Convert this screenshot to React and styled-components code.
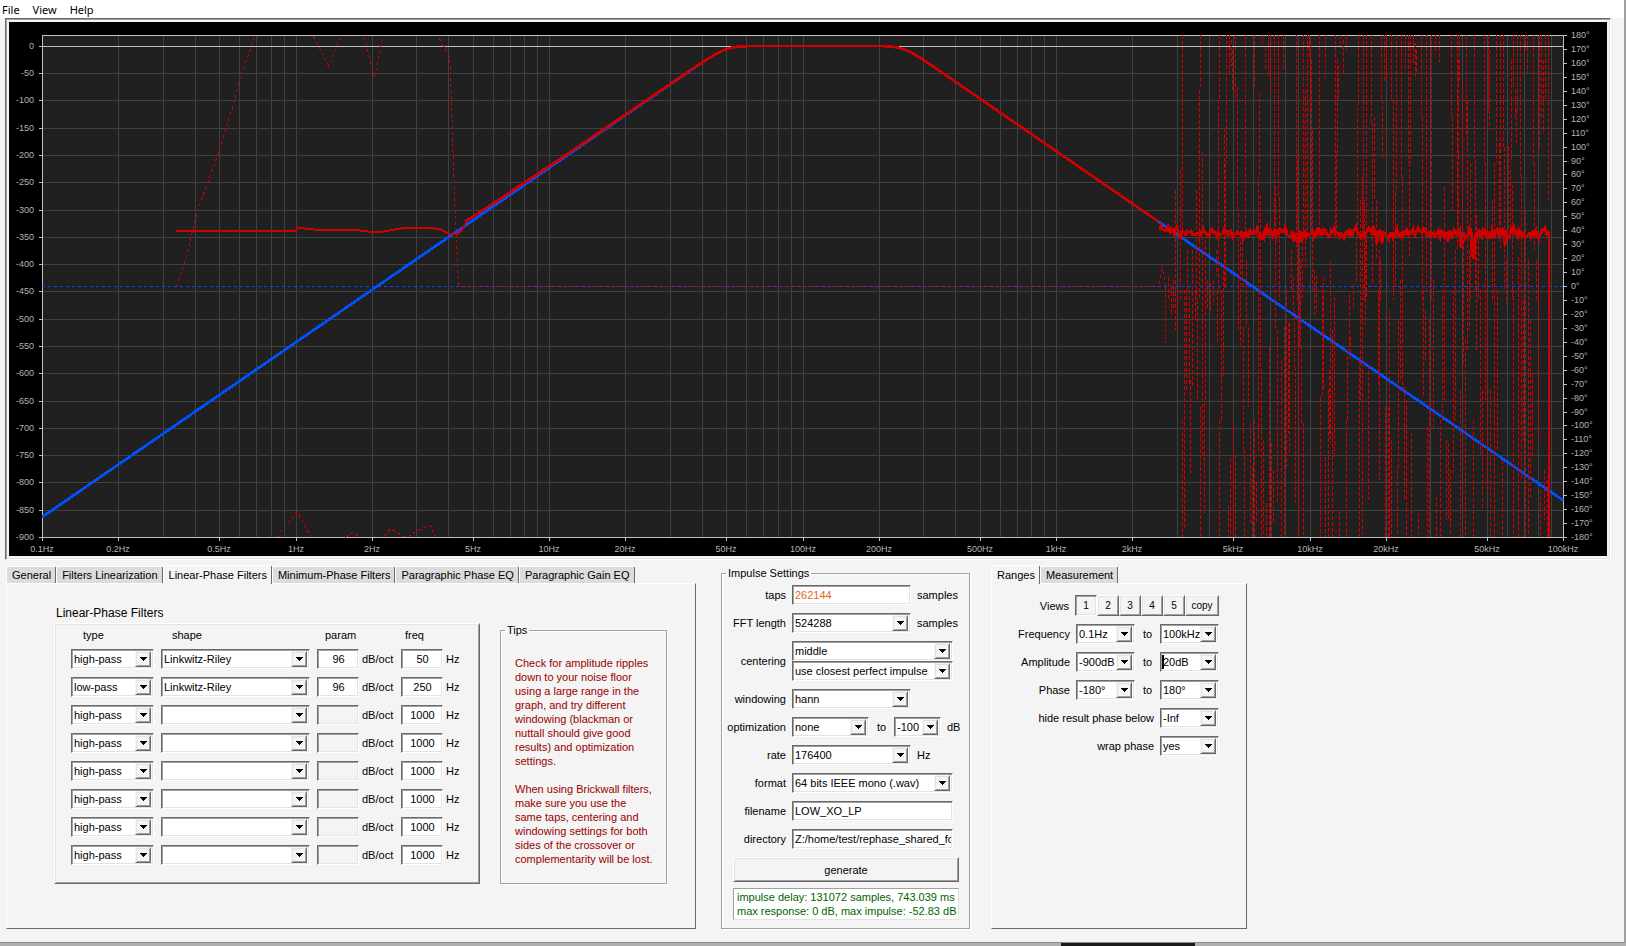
import React from "react";
import styled, { createGlobalStyle } from "styled-components";

const GlobalStyle = createGlobalStyle`
  * {
    box-sizing: border-box;
  }

  body {
    margin: 0;
    background: #b0b0b0;
    color: #000;
    font-family: "Liberation Sans", Arial, sans-serif;
    font-size: 11px;
    line-height: 14px;
  }

  button, input, select {
    font: inherit;
    color: inherit;
    border-radius: 0;
    margin: 0;
  }
`;

const Desktop = styled.div`
  display: flex;
  flex-direction: column;
  min-height: 100vh;
`;

const Window = styled.main`
  flex: 1;
  display: flex;
  flex-direction: column;
  background: #f4f4f4;
  border-right: 2px solid #a0a0a0;
  border-bottom: 1px solid #8c8c8c;
`;

const MenuBar = styled.nav`
  display: flex;
  gap: 13px;
  height: 18px;
  padding: 0 2px;
  background: #fff;
`;

const MenuItem = styled.button`
  padding: 2px 0 0;
  border: 0;
  background: none;
  font-family: "Noto Sans", sans-serif;
  line-height: 16px;
`;

const ChartFrame = styled.div`
  margin: 0 13px 0 5px;
  padding: 2px;
  border: 1px solid;
  border-color: #696969 #fff #fff #696969;
  box-shadow: inset 1px 1px #a0a0a0, inset -1px -1px #e3e3e3;

  svg {
    display: block;
    width: 100%;
    height: auto;
    border: 1px solid #f4f4f4;
  }

  text {
    font-size: 9px;
    fill: #b4b4b4;
  }
`;

const Lower = styled.div`
  flex: 1;
  display: flex;
  align-items: stretch;
  padding: 6px 6px 13px;
`;

const Column = styled.section`
  display: flex;
  flex-direction: column;
  margin-right: ${(p) => p.$after || 0}px;
`;

const TabList = styled.div`
  display: flex;
  align-items: flex-end;
  height: 18px;
  margin-bottom: -1px;
`;

const Tab = styled.button`
  position: relative;
  height: ${(p) => (p.$active ? 19 : 17)}px;
  margin-bottom: ${(p) => (p.$active ? 0 : 1)}px;
  padding: 0 4px 0 5px;
  border: 1px solid;
  border-color: #fff #696969 #fff #fff;
  border-bottom: 0;
  border-radius: 2px 2px 0 0;
  background: ${(p) => (p.$active ? "#f4f4f4" : "#dcdcdc")};
  white-space: nowrap;
`;

const TabPanel = styled.div`
  flex: 1;
  border: 1px solid;
  border-color: #fff #696969 #696969 #fff;
  padding: ${(p) => p.$pad};
`;

const PanelTitle = styled.h2`
  margin: 0 0 2px;
  padding-left: 2px;
  font-size: 12px;
  font-weight: 400;
  line-height: 16px;
`;

const PanelBody = styled.div`
  display: flex;
  align-items: stretch;
  gap: 20px;
`;

const raised = `
  border: 1px solid;
  border-color: #fff #696969 #696969 #fff;
  box-shadow: inset 1px 1px #e3e3e3, inset -1px -1px #a0a0a0;
`;

const sunken = `
  border: 1px solid;
  border-color: #696969 #fff #fff #696969;
  box-shadow: inset 1px 1px #a0a0a0, inset -1px -1px #e3e3e3;
`;

const FilterBox = styled.div`
  ${raised}
  display: flex;
  flex-direction: column;
  gap: 8px;
  padding: 4px 18px 18px 16px;
`;

const FilterRow = styled.div`
  display: grid;
  grid-template-columns: 83px 149px 77px 60px;
  column-gap: 7px;
`;

const HeadCell = styled.span`
  height: 13px;
  padding-left: ${(p) => p.$indent}px;
`;

const Unit = styled.span`
  display: flex;
  align-items: center;
  gap: 3px;
`;

const Combo = styled.span`
  ${sunken}
  display: grid;
  align-items: center;
  width: ${(p) => p.$w}px;
  height: 20px;
  background: #fff;

  > * {
    grid-area: 1 / 1;
  }

  select {
    appearance: none;
    width: 100%;
    height: 18px;
    padding: 0 18px 0 2px;
    border: 0;
    outline: 0;
    background: transparent;
    text-overflow: clip;
  }
`;

const Arrow = styled.span`
  ${raised}
  justify-self: end;
  display: flex;
  align-items: center;
  justify-content: center;
  width: 16px;
  height: 16px;
  margin-right: 2px;
  background: #f4f4f4;
  border-color: #f4f4f4 #696969 #696969 #f4f4f4;
  pointer-events: none;
`;

const Caret = styled.span`
  width: 2px;
  height: 14px;
  margin-left: 1px;
  background: #000;
`;

const Field = styled.input`
  ${sunken}
  width: ${(p) => p.$w}px;
  height: 20px;
  padding: 0 1px 0 2px;
  outline: 0;
  background: #fff;
  color: ${(p) => (p.$warn ? "#e8641b" : "#000")};
  text-align: ${(p) => (p.$center ? "center" : "left")};

  &:disabled {
    background: #f4f4f4;
  }
`;

const Group = styled.fieldset`
  flex-grow: ${(p) => (p.$fill ? 1 : 0)};
  min-width: 0;
  width: ${(p) => p.$w}px;
  margin: 0;
  padding: 0;
  border: 1px solid #a0a0a0;
  box-shadow: 1px 1px #fff, inset 1px 1px #fff;

  legend {
    margin-left: 4px;
    padding: 0 2px;
  }
`;

const Tips = styled.div`
  padding: 19px 10px 0 14px;
`;

const Tip = styled.p`
  margin: 0 0 14px;
  color: #990000;
`;

const Settings = styled.div`
  display: flex;
  flex-direction: column;
  gap: 8px;
  padding: 5px 0 8px;
`;

const SettingRow = styled.div`
  display: flex;
  align-items: center;
  gap: 6px;
  white-space: nowrap;
`;

const SettingLabel = styled.label`
  width: 64px;
  text-align: right;
`;

const Stack = styled.span`
  display: flex;
  flex-direction: column;
`;

const Between = styled.span`
  width: 13px;
  text-align: center;
`;

const Actions = styled.div`
  display: flex;
  flex-direction: column;
  gap: 6px;
  padding: 0 10px 0 11px;
`;

const Generate = styled.button`
  ${raised}
  height: 25px;
  background: #f4f4f4;
`;

const Status = styled.output`
  display: block;
  padding: 1px 3px;
  border: 1px solid;
  border-color: #a0a0a0 #e3e3e3 #e3e3e3 #a0a0a0;
  background: #fff;
  color: #006400;
  white-space: nowrap;
`;

const RangeRows = styled.div`
  display: flex;
  flex-direction: column;
  gap: 8px;
  width: 227px;
`;

const RangeRow = styled.div`
  display: flex;
  align-items: center;
  justify-content: flex-end;
  gap: 6px;
`;

const ViewButtons = styled.span`
  display: flex;
`;

const ViewButton = styled.button`
  ${(p) => (p.$down ? sunken : raised)}
  width: ${(p) => p.$w || 22}px;
  height: 21px;
  padding: 0;
  background: #f4f4f4;
  font-size: 10px;
`;

const Taskbar = styled.div`
  display: flex;
  height: 3px;
  padding-left: 65%;
  background: #b0b0b0;
`;

const TaskItem = styled.div`
  width: 134px;
  margin-left: 4px;
  background: #1a1a1a;
`;

/* ---------- response chart ---------- */

const LEFT = 42;
const RIGHT = 1563;
const TOP = 35;
const BOTTOM = 537;
const DECADE = (RIGHT - LEFT) / 6;

const xOf = (f) => LEFT + DECADE * Math.log10(f / 0.1);
const yOf = (db) => TOP + ((20 - db) / 920) * (BOTTOM - TOP);
const yOfPhase = (deg) => TOP + ((180 - deg) / 360) * (BOTTOM - TOP);

const freqLabels = [
  [0.1, "0.1Hz"], [0.2, "0.2Hz"], [0.5, "0.5Hz"], [1, "1Hz"], [2, "2Hz"], [5, "5Hz"],
  [10, "10Hz"], [20, "20Hz"], [50, "50Hz"], [100, "100Hz"], [200, "200Hz"], [500, "500Hz"],
  [1e3, "1kHz"], [2e3, "2kHz"], [5e3, "5kHz"], [1e4, "10kHz"], [2e4, "20kHz"],
  [5e4, "50kHz"], [1e5, "100kHz"],
];

const gridFreqs = [];
for (let d = -1; d < 5; d++) {
  for (let k = 1; k < 10; k++) gridFreqs.push(k * 10 ** d);
}

const dbSteps = Array.from({ length: 19 }, (_, i) => -50 * i);
const phaseSteps = Array.from({ length: 37 }, (_, i) => 180 - 10 * i);

// 16th order Linkwitz-Riley, high-pass at 50Hz and low-pass at 250Hz
const response = (x) => {
  const f = 0.1 * 10 ** ((x - LEFT) / DECADE);
  return -20 * (Math.log10(1 + (50 / f) ** 16) + Math.log10(1 + (f / 250) ** 16));
};

const toPoints = (list) => list.map(([x, y]) => `${x},${y}`).join(" ");

const target = [];
for (let x = LEFT; x <= RIGHT; x += 3) target.push([x, yOf(response(x)).toFixed(1)]);

const lowFloor = [
  [176, 231], [296, 231], [297, 228], [313, 229], [315, 230], [353, 230], [366, 231],
  [370, 232], [380, 232], [392, 230], [404, 228], [417, 228], [430, 228], [440, 229],
  [449, 234], [458, 234], [462, 230], [466, 222],
];

const result = [];
for (let x = 465; x <= 1160; x += 3) {
  const lift = x < 700 ? 4 * Math.exp((466 - x) / 90) : 0;
  result.push([x, (yOf(response(x)) - lift).toFixed(1)]);
}

const dips = {
  1181: 239, 1262: 240, 1294: 242, 1298: 243, 1301: 242, 1377: 244, 1382: 244, 1448: 242,
  1461: 248, 1472: 253, 1473: 258, 1474: 258, 1505: 246,
};
let seed = 7;
const random = () => {
  seed = (seed * 16807) % 2147483647;
  return seed / 2147483647;
};

const highFloor = [];
let drift = 0;
for (let x = 1160; x < 1549; x++) {
  const calm = x < 1240 ? 0.7 : 1;
  drift = drift * 0.5 + (random() - 0.5) * 4;
  const n = (drift + (random() - 0.5) * 8) * calm;
  const base = x < 1178 ? 229 : 233;
  highFloor.push([x, dips[x] || Math.round(base + n)]);
}

const phaseCurves = [
  [[176, 286], [186, 256], [197, 210], [217, 155], [234, 100], [241, 73], [251, 46], [254, 36], [257, 36]],
  [[313, 36], [328, 65], [340, 37]],
  [[364, 37], [366, 46], [374, 77], [382, 37]],
  [[439, 38], [443, 46], [449, 56], [450, 75], [452, 135], [454, 195], [456, 240], [458, 287]],
  [[277, 537], [281, 530], [286, 525], [297, 511], [300, 517], [307, 530], [311, 537]],
  [[345, 537], [352, 532], [358, 535]],
  [[384, 536], [390, 528], [403, 536], [406, 537], [417, 530], [428, 525], [431, 526], [434, 536]],
  [[459, 286], [1152, 286], [1158, 286], [1162, 265], [1165, 287]],
];

// wrapped phase in the noise floor: x, from y, to y
const phaseSpikes = [
  1165, 287, 343, 1168, 277, 300, 1171, 286, 316, 1173, 280, 310, 1175, 190, 330, 1177, 290, 331,
  1180, 170, 300, 1182, 35, 235, 1182, 420, 537, 1184, 290, 530, 1186, 290, 390, 1187, 250, 290,
  1189, 290, 386, 1190, 380, 473, 1192, 250, 386, 1195, 290, 320, 1196, 190, 300, 1197, 300, 403,
  1199, 90, 300, 1200, 35, 90, 1200, 407, 537, 1202, 152, 457, 1204, 403, 513, 1205, 240, 403,
  1207, 280, 310, 1210, 283, 312, 1213, 280, 305, 1216, 250, 275, 1217, 290, 343, 1218, 100, 290,
  1219, 35, 100, 1219, 420, 537, 1221, 290, 423, 1223, 270, 377, 1224, 128, 290, 1225, 163, 287,
  1226, 35, 163, 1228, 505, 537, 1229, 35, 75, 1230, 458, 537, 1231, 40, 66, 1232, 50, 90,
  1233, 422, 537, 1235, 35, 98, 1235, 455, 537, 1237, 87, 213, 1238, 213, 330, 1240, 235, 345,
  1242, 235, 290, 1243, 327, 450, 1244, 450, 537, 1245, 35, 233, 1246, 260, 327, 1248, 327, 407,
  1250, 423, 523, 1252, 467, 537, 1254, 35, 90, 1254, 420, 537, 1256, 482, 523, 1258, 177, 453,
  1259, 93, 177, 1260, 195, 370, 1261, 370, 537, 1262, 35, 43, 1263, 440, 537, 1265, 47, 70,
  1266, 503, 537, 1268, 35, 75, 1269, 347, 537, 1270, 35, 93, 1271, 443, 537, 1273, 470, 523,
  1274, 35, 233, 1275, 187, 330, 1277, 330, 503, 1278, 35, 197, 1279, 197, 300, 1281, 360, 537,
  1283, 35, 70, 1284, 327, 537, 1286, 290, 467, 1288, 323, 433, 1289, 323, 453, 1291, 250, 290,
  1293, 277, 310, 1294, 310, 367, 1295, 367, 503, 1296, 35, 247, 1297, 153, 300, 1298, 300, 537,
  1299, 240, 347, 1300, 260, 350, 1301, 347, 423, 1302, 240, 300, 1303, 35, 240, 1303, 423, 537,
  1305, 90, 270, 1307, 35, 233, 1309, 35, 60, 1310, 40, 112, 1311, 60, 230, 1312, 130, 290,
  1314, 270, 315, 1316, 275, 312, 1319, 35, 230, 1320, 397, 537, 1322, 290, 397, 1323, 277, 390,
  1325, 35, 78, 1325, 457, 537, 1328, 390, 537, 1329, 370, 437, 1330, 262, 443, 1332, 330, 537,
  1334, 297, 457, 1335, 35, 230, 1336, 153, 230, 1337, 60, 153, 1338, 65, 98, 1339, 510, 537,
  1340, 35, 44, 1343, 40, 74, 1346, 35, 50, 1346, 420, 537, 1347, 350, 420, 1349, 294, 350,
  1350, 337, 360, 1353, 285, 310, 1356, 230, 283, 1357, 107, 230, 1358, 35, 107, 1359, 360, 537,
  1360, 200, 400, 1362, 177, 537, 1363, 35, 233, 1364, 200, 300, 1365, 233, 325, 1366, 35, 300,
  1368, 365, 500, 1371, 35, 123, 1372, 123, 287, 1374, 117, 200, 1376, 200, 260, 1378, 290, 385,
  1379, 250, 480, 1380, 260, 300, 1381, 35, 100, 1382, 100, 160, 1384, 35, 83, 1385, 407, 537,
  1386, 35, 80, 1388, 407, 537, 1389, 310, 537, 1391, 35, 100, 1391, 440, 537, 1393, 100, 300,
  1395, 193, 290, 1396, 35, 193, 1397, 470, 537, 1398, 320, 470, 1400, 280, 380, 1401, 35, 177,
  1402, 177, 390, 1404, 387, 500, 1405, 35, 70, 1406, 400, 537, 1408, 35, 163, 1409, 163, 257,
  1410, 35, 163, 1411, 433, 537, 1413, 35, 63, 1415, 43, 80, 1416, 50, 73, 1418, 513, 537,
  1421, 35, 117, 1422, 117, 300, 1423, 290, 397, 1425, 310, 360, 1426, 35, 290, 1427, 427, 537,
  1429, 320, 537, 1431, 35, 163, 1431, 163, 300, 1433, 280, 430, 1435, 35, 53, 1436, 497, 537,
  1439, 35, 62, 1440, 420, 537, 1442, 290, 420, 1444, 187, 400, 1446, 440, 520, 1448, 443, 520,
  1450, 470, 537, 1451, 35, 117, 1452, 117, 213, 1453, 290, 473, 1455, 250, 420, 1457, 35, 250,
  1458, 60, 230, 1459, 35, 80, 1460, 390, 537, 1462, 80, 230, 1463, 240, 363, 1465, 340, 537,
  1466, 35, 137, 1467, 100, 350, 1469, 250, 330, 1470, 163, 300, 1473, 420, 537, 1474, 35, 160,
  1475, 160, 290, 1476, 215, 350, 1478, 240, 300, 1480, 290, 455, 1482, 390, 510, 1484, 35, 163,
  1485, 163, 400, 1487, 280, 490, 1488, 35, 110, 1489, 50, 130, 1490, 390, 537, 1492, 200, 300,
  1494, 163, 537, 1496, 35, 163, 1497, 290, 450, 1499, 143, 230, 1500, 35, 250, 1502, 460, 537,
  1503, 35, 147, 1504, 147, 290, 1506, 260, 305, 1508, 147, 230, 1510, 170, 230, 1511, 60, 163,
  1512, 185, 300, 1513, 35, 90, 1513, 290, 537, 1515, 90, 117, 1516, 110, 143, 1517, 35, 110,
  1518, 257, 537, 1520, 35, 175, 1521, 175, 480, 1523, 300, 440, 1525, 35, 50, 1525, 210, 537,
  1527, 35, 73, 1528, 260, 537, 1530, 320, 500, 1532, 373, 455, 1533, 35, 163, 1534, 163, 250,
  1536, 260, 300, 1538, 263, 440, 1539, 35, 150, 1540, 490, 537, 1541, 35, 117, 1543, 60, 133,
  1544, 470, 520, 1545, 35, 100, 1547, 480, 537, 1548, 35, 200,
];

const spikePath = [];
for (let i = 0; i < phaseSpikes.length; i += 3) {
  const [x, a, b] = phaseSpikes.slice(i, i + 3);
  spikePath.push(`M${x}.5 ${a}V${b}`);
}

const Chart = () => (
  <ChartFrame>
    <svg viewBox="9 22 1598 534" role="img" aria-label="Amplitude and phase response">
      <rect x="9" y="22" width="1598" height="534" fill="#000" />
      <rect x={LEFT} y={TOP} width={RIGHT - LEFT} height={BOTTOM - TOP} fill="#202020" />
      <g shapeRendering="crispEdges" fill="none">
        <g stroke="#404040">
          {gridFreqs.map((f) => (
            <path key={f} d={`M${Math.round(xOf(f)) + 0.5} ${TOP}V${BOTTOM}`} />
          ))}
          {dbSteps.map((db) => (
            <path key={db} d={`M${LEFT} ${Math.round(yOf(db)) + 0.5}H${RIGHT}`} />
          ))}
        </g>
        <g stroke="#c0c0c0">
          <path d={`M${LEFT} 46.5H${RIGHT}`} />
          <path d={`M${LEFT}.5 ${TOP}.5H${RIGHT}.5V${BOTTOM}.5H${LEFT}.5Z`} />
          {dbSteps.map((db) => (
            <path key={db} d={`M${LEFT - 3} ${Math.round(yOf(db)) + 0.5}H${LEFT}`} />
          ))}
          {phaseSteps.map((deg) => (
            <path key={deg} d={`M${RIGHT} ${Math.round(yOfPhase(deg)) + 0.5}h4`} />
          ))}
          {freqLabels.map(([f]) => (
            <path key={f} d={`M${Math.round(xOf(f)) + 0.5} ${BOTTOM}v4`} />
          ))}
        </g>
        <path d={`M${LEFT} 286.5H${RIGHT}`} stroke="#0050ff" strokeDasharray="3 3" />
        <polyline points={toPoints(target)} stroke="#0050ff" strokeWidth="2.7" />
        <g stroke="#d00000" strokeDasharray="3 3">
          {phaseCurves.map((c, i) => (
            <polyline key={i} points={toPoints(c.map(([x, y]) => [x + 0.5, y + 0.5]))} />
          ))}
          <path d={spikePath.join("")} strokeDasharray="4 2" />
        </g>
        <g stroke="#d00000" strokeWidth="2">
          <polyline points={toPoints(lowFloor)} />
          <polyline points={toPoints(result)} strokeWidth="2.7" />
          <polyline points={toPoints(highFloor)} strokeWidth="2.7" />
          <path d={`M1549 231V${BOTTOM}`} />
        </g>
      </g>
      <g textAnchor="end">
        {dbSteps.map((db) => (
          <text key={db} x="34" y={Math.round(yOf(db)) + 3}>{db}</text>
        ))}
      </g>
      <g>
        {phaseSteps.map((deg) => (
          <text key={deg} x="1571" y={Math.round(yOfPhase(deg)) + 3}>{deg}°</text>
        ))}
      </g>
      <g textAnchor="middle">
        {freqLabels.map(([f, label]) => (
          <text key={f} x={Math.round(xOf(f))} y="552">{label}</text>
        ))}
      </g>
    </svg>
  </ChartFrame>
);

/* ---------- controls ---------- */

const Select = ({ id, label, value, w, caret }) => (
  <Combo $w={w}>
    <select id={id} aria-label={label} defaultValue={value}>
      <option value={value}>{value}</option>
    </select>
    {caret && <Caret />}
    <Arrow>
      <svg width="7" height="4" shapeRendering="crispEdges" aria-hidden="true">
        <path d="M0 0h7v1H6v1H5v1H4v1H3V3H2V2H1V1H0z" />
      </svg>
    </Arrow>
  </Combo>
);

const Tabs = ({ names, active }) => (
  <TabList role="tablist">
    {names.map((name) => (
      <Tab key={name} role="tab" aria-selected={name === active} $active={name === active}>
        {name}
      </Tab>
    ))}
  </TabList>
);

const filters = [
  { type: "high-pass", shape: "Linkwitz-Riley", param: "96", freq: "50" },
  { type: "low-pass", shape: "Linkwitz-Riley", param: "96", freq: "250" },
  ...Array.from({ length: 6 }, () => ({ type: "high-pass", shape: "", param: "", freq: "1000" })),
];

const FilterTable = () => (
  <FilterBox>
    <FilterRow>
      <HeadCell $indent={12}>type</HeadCell>
      <HeadCell $indent={11}>shape</HeadCell>
      <HeadCell $indent={8}>param</HeadCell>
      <HeadCell $indent={4}>freq</HeadCell>
    </FilterRow>
    {filters.map((f, i) => (
      <FilterRow key={i}>
        <Select label={`Filter ${i + 1} type`} value={f.type} w={83} />
        <Select label={`Filter ${i + 1} shape`} value={f.shape} w={149} />
        <Unit>
          <Field
            aria-label={`Filter ${i + 1} param`}
            defaultValue={f.param}
            disabled={!f.param}
            $w={42}
            $center
          />
          dB/oct
        </Unit>
        <Unit>
          <Field aria-label={`Filter ${i + 1} freq`} defaultValue={f.freq} $w={42} $center />
          Hz
        </Unit>
      </FilterRow>
    ))}
  </FilterBox>
);

const FilterTips = () => (
  <Group $w={167}>
    <legend>Tips</legend>
    <Tips>
      <Tip>
        Check for amplitude ripples down to your noise floor using a large range in the graph,
        and try different windowing (blackman or nuttall should give good results) and
        optimization settings.
      </Tip>
      <Tip>
        When using Brickwall filters, make sure you use the same taps, centering and windowing
        settings for both sides of the crossover or complementarity will be lost.
      </Tip>
    </Tips>
  </Group>
);

const ImpulseSettings = () => (
  <Group $w={249} $fill>
    <legend>Impulse Settings</legend>
    <Settings>
      <SettingRow>
        <SettingLabel htmlFor="taps">taps</SettingLabel>
        <Field id="taps" defaultValue="262144" $w={119} $warn />
        samples
      </SettingRow>
      <SettingRow>
        <SettingLabel htmlFor="fft">FFT length</SettingLabel>
        <Select id="fft" value="524288" w={119} />
        samples
      </SettingRow>
      <SettingRow>
        <SettingLabel htmlFor="centering">centering</SettingLabel>
        <Stack>
          <Select id="centering" value="middle" w={161} />
          <Select label="centering mode" value="use closest perfect impulse" w={161} />
        </Stack>
      </SettingRow>
      <SettingRow>
        <SettingLabel htmlFor="windowing">windowing</SettingLabel>
        <Select id="windowing" value="hann" w={119} />
      </SettingRow>
      <SettingRow>
        <SettingLabel htmlFor="optimization">optimization</SettingLabel>
        <Select id="optimization" value="none" w={77} />
        <Between>to</Between>
        <Select label="optimization floor" value="-100" w={47} />
        dB
      </SettingRow>
      <SettingRow>
        <SettingLabel htmlFor="rate">rate</SettingLabel>
        <Select id="rate" value="176400" w={119} />
        Hz
      </SettingRow>
      <SettingRow>
        <SettingLabel htmlFor="format">format</SettingLabel>
        <Select id="format" value="64 bits IEEE mono (.wav)" w={161} />
      </SettingRow>
      <SettingRow>
        <SettingLabel htmlFor="filename">filename</SettingLabel>
        <Field id="filename" defaultValue="LOW_XO_LP" $w={161} />
      </SettingRow>
      <SettingRow>
        <SettingLabel htmlFor="directory">directory</SettingLabel>
        <Field id="directory" defaultValue="Z:/home/test/rephase_shared_folder" $w={161} />
      </SettingRow>
    </Settings>
    <Actions>
      <Generate>generate</Generate>
      <Status>
        impulse delay: 131072 samples, 743.039 ms
        <br />
        max response: 0 dB, max impulse: -52.83 dB
      </Status>
    </Actions>
  </Group>
);

const ranges = [
  { name: "Frequency", from: "0.1Hz", to: "100kHz" },
  { name: "Amplitude", from: "-900dB", to: "20dB", caret: true },
  { name: "Phase", from: "-180°", to: "180°" },
];

const Ranges = () => (
  <RangeRows>
    <RangeRow>
      <span>Views</span>
      <ViewButtons>
        {[1, 2, 3, 4, 5].map((n) => (
          <ViewButton key={n} $down={n === 1}>{n}</ViewButton>
        ))}
        <ViewButton $w={34}>copy</ViewButton>
      </ViewButtons>
    </RangeRow>
    {ranges.map((r) => (
      <RangeRow key={r.name}>
        <label htmlFor={r.name}>{r.name}</label>
        <Select id={r.name} value={r.from} w={59} />
        <Between>to</Between>
        <Select label={`${r.name} to`} value={r.to} w={59} caret={r.caret} />
      </RangeRow>
    ))}
    <RangeRow>
      <label htmlFor="hide">hide result phase below</label>
      <Select id="hide" value="-Inf" w={59} />
    </RangeRow>
    <RangeRow>
      <label htmlFor="wrap">wrap phase</label>
      <Select id="wrap" value="yes" w={59} />
    </RangeRow>
  </RangeRows>
);

const filterTabs = [
  "General",
  "Filters Linearization",
  "Linear-Phase Filters",
  "Minimum-Phase Filters",
  "Paragraphic Phase EQ",
  "Paragraphic Gain EQ",
];

const App = () => (
  <Desktop>
    <GlobalStyle />
    <Window>
      <MenuBar>
        <MenuItem>File</MenuItem>
        <MenuItem>View</MenuItem>
        <MenuItem>Help</MenuItem>
      </MenuBar>
      <Chart />
      <Lower>
        <Column $after={25}>
          <Tabs names={filterTabs} active="Linear-Phase Filters" />
          <TabPanel $pad="21px 28px 44px 47px">
            <PanelTitle>Linear-Phase Filters</PanelTitle>
            <PanelBody>
              <FilterTable />
              <FilterTips />
            </PanelBody>
          </TabPanel>
        </Column>
        <Column $after={21}>
          <ImpulseSettings />
        </Column>
        <Column>
          <Tabs names={["Ranges", "Measurement"]} active="Ranges" />
          <TabPanel $pad="11px 27px 11px 0">
            <Ranges />
          </TabPanel>
        </Column>
      </Lower>
    </Window>
    <Taskbar>
      <TaskItem />
    </Taskbar>
  </Desktop>
);

export default App;
